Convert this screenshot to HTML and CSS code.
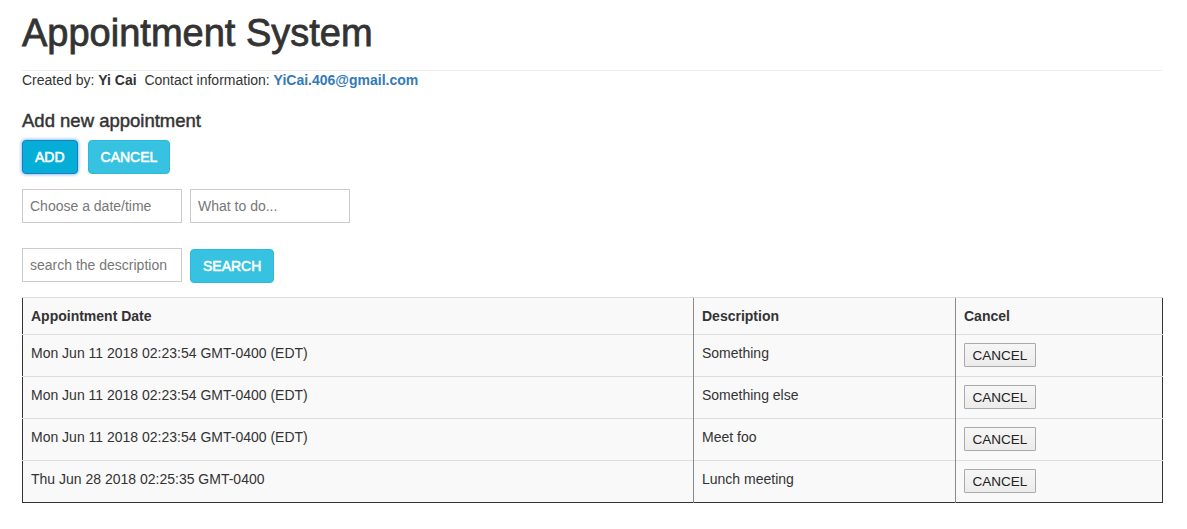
FILE: index.html
```html
<!DOCTYPE html>
<html>
<head>
<meta charset="utf-8">
<title>Appointment System</title>
<link rel="stylesheet" href="styles.css">
</head>
<body>
<div class="container">
  <h1 class="title">Appointment System</h1>
  <hr class="rule">
  <p class="credits">Created by: <b>Yi Cai</b>&nbsp; Contact information: <a class="mail" href="#">YiCai.406@gmail.com</a></p>
  <h4 class="subtitle">Add new appointment</h4>
  <div class="btn-row">
    <button class="btn btn-focus">ADD</button>
    <button class="btn">CANCEL</button>
  </div>
  <div class="input-row">
    <input class="field" type="text" placeholder="Choose a date/time">
    <input class="field" type="text" placeholder="What to do...">
  </div>
  <div class="search-row">
    <input class="field" type="text" placeholder="search the description">
    <button class="btn btn-search">SEARCH</button>
  </div>
  <table class="appts">
    <thead>
      <tr><th class="c1">Appointment Date</th><th class="c2">Description</th><th class="c3">Cancel</th></tr>
    </thead>
    <tbody>
      <tr><td>Mon Jun 11 2018 02:23:54 GMT-0400 (EDT)</td><td>Something</td><td><button class="row-btn">CANCEL</button></td></tr>
      <tr><td>Mon Jun 11 2018 02:23:54 GMT-0400 (EDT)</td><td>Something else</td><td><button class="row-btn">CANCEL</button></td></tr>
      <tr><td>Mon Jun 11 2018 02:23:54 GMT-0400 (EDT)</td><td>Meet foo</td><td><button class="row-btn">CANCEL</button></td></tr>
      <tr><td>Thu Jun 28 2018 02:25:35 GMT-0400</td><td>Lunch meeting</td><td><button class="row-btn">CANCEL</button></td></tr>
    </tbody>
  </table>
</div>
</body>
</html>
```
FILE: styles.css
```css
* { box-sizing: border-box; }
html, body { margin: 0; padding: 0; background: #fff; }
body {
  font-family: "Liberation Sans", Arial, Helvetica, sans-serif;
  font-size: 14px;
  line-height: 20px;
  color: #333;
}
.container {
  width: 1140px;
  margin-left: 22px;
}
.title {
  margin: 12px 0 0;
  font-size: 38px;
  line-height: 42px;
  font-weight: 500;
  color: #333;
  -webkit-text-stroke: 0.8px #333;
}
.rule {
  margin: 16px 0 0;
  border: 0;
  border-top: 1px solid #eee;
  height: 0;
}
.credits {
  margin: 0;
  font-size: 14px;
  line-height: 18px;
}
.credits b { font-weight: bold; color: #333; }
.mail { color: #337ab7; font-weight: bold; text-decoration: none; }
.subtitle {
  margin: 22px 0 0;
  font-size: 18.5px;
  line-height: 20px;
  font-weight: 500;
  -webkit-text-stroke: 0.45px #333;
}
.btn-row {
  display: flex;
  gap: 10px;
  margin-top: 9px;
}
.btn {
  height: 34px;
  padding: 0 12px;
  font-family: inherit;
  font-size: 14px;
  font-weight: normal;
  -webkit-text-stroke: 0.55px #fff;
  color: #fff;
  background: #36c2e0;
  border: 1px solid #2fb9d8;
  border-radius: 4px;
}
.btn-focus {
  background: #04aed7;
  border-color: #1a7fc0;
  box-shadow: 0 0 3px 1px rgba(80, 150, 240, 0.6);
}
.input-row {
  display: flex;
  gap: 8px;
  margin-top: 15px;
}
.field {
  width: 160px;
  height: 34px;
  padding: 0 7px;
  border: 1px solid #ccc;
  border-radius: 0;
  font-family: inherit;
  font-size: 14px;
  color: #555;
  outline: none;
}
.field::placeholder { color: #777; }
.search-row {
  display: flex;
  gap: 8px;
  margin-top: 25px;
  align-items: flex-start;
}
.btn-search { margin-top: 1px; }
.appts {
  margin-top: 14px;
  width: 1140px;
  border-collapse: collapse;
  background: #f9f9f9;
  border-left: 1px solid #333;
  border-right: 1px solid #333;
  border-bottom: 1px solid #333;
  border-top: 1px solid #ddd;
  table-layout: fixed;
}
.c1 { width: 671px; }
.c2 { width: 262px; }
.c3 { width: 207px; }
.appts th, .appts td {
  padding: 8px;
  text-align: left;
  vertical-align: top;
  border-top: 1px solid #ddd;
  font-size: 14px;
  line-height: 20px;
}
.appts th { font-weight: bold; height: 36px; }
.appts td { height: 42px; }
.appts th + th, .appts td + td { border-left: 1px solid #8a8a8a; }
.row-btn {
  display: block;
  margin-top: 0;
  height: 24px;
  width: 72px;
  padding: 0;
  font-family: inherit;
  font-size: 13.5px;
  color: #222;
  background: linear-gradient(#f6f6f6, #ececec);
  border: 1px solid #aaa;
  border-radius: 1px;
}
```
